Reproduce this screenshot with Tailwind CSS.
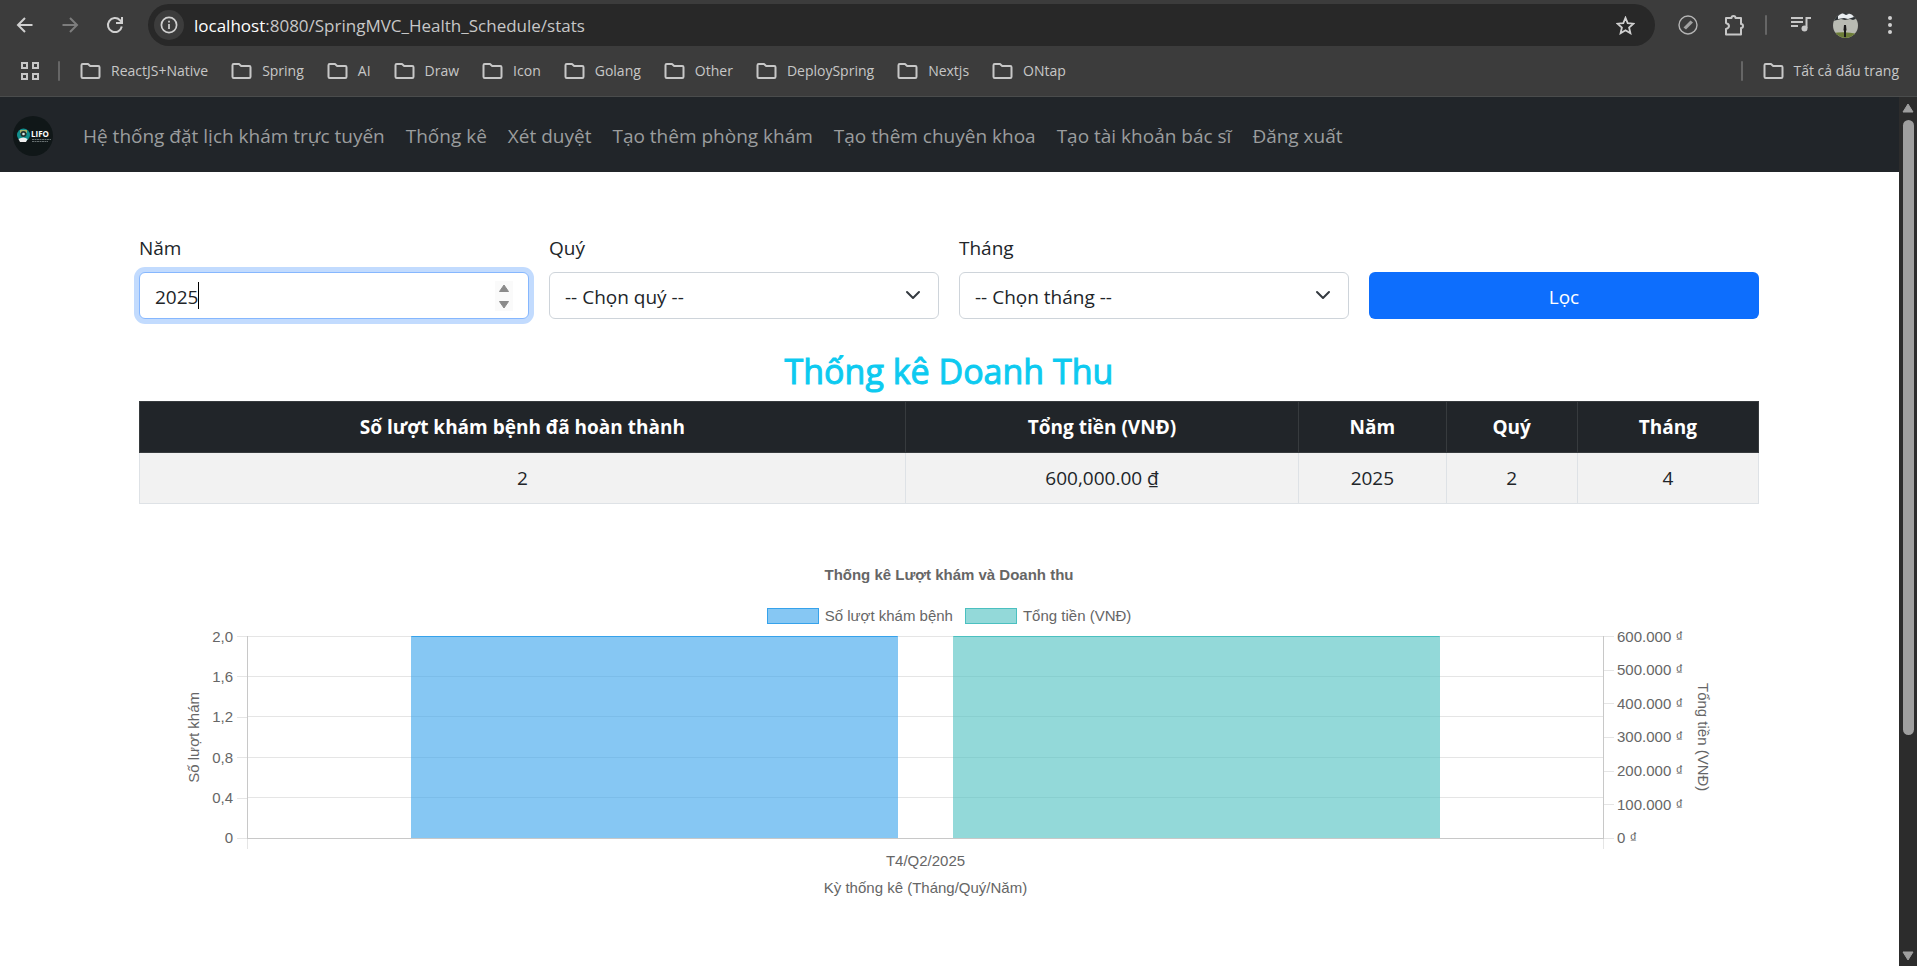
<!DOCTYPE html>
<html lang="vi">
<head>
<meta charset="utf-8">
<meta name="viewport" content="width=device-width, initial-scale=1">
<title>Thống kê Doanh Thu</title>
<script src="https://cdn.jsdelivr.net/npm/@tailwindcss/browser@4"></script>
</head>
<body class="flex h-screen flex-col overflow-hidden bg-white font-['Open_Sans','Noto_Sans',sans-serif] text-[19px] leading-[30px] text-[#212529]">

<svg class="hidden" aria-hidden="true">
  <symbol id="folder" viewBox="0 0 21 18"><path d="M1.500 3.200v11.600q0 1.200 1.200 1.200h15.600q1.200 0 1.200-1.200V5.200q0-1.200-1.200-1.200H10.200L8 2H2.700Q1.500 2 1.500 3.200Z" fill="none" stroke="#c7c7c7" stroke-width="2" stroke-linejoin="round"/></symbol>
  <symbol id="chevron" viewBox="0 0 16 16"><path d="m2 5 6 6 6-6" fill="none" stroke="#343a40" stroke-width="2" stroke-linecap="round" stroke-linejoin="round"/></symbol>
</svg>

<!-- Browser toolbar -->
<header class="shrink-0 border-b border-[#4a4c4c] bg-[#3c3c3c] text-[#c7c7c7]">
  <div class="flex h-[50px] items-center">
    <div class="flex w-[148px] shrink-0 items-center gap-[13px] pl-[9px]">
      <button aria-label="Quay lại" class="flex size-8 items-center justify-center"><svg class="size-[18px]" viewBox="0 0 18 18" fill="none" stroke="#d0d0d0" stroke-width="2"><path d="M16.500 9H2M9 2 2 9l7 7"/></svg></button>
      <button aria-label="Tiến" class="flex size-8 items-center justify-center"><svg class="size-[18px]" viewBox="0 0 18 18" fill="none" stroke="#7d7d7d" stroke-width="2"><path d="M1.500 9H16M9 2l7 7-7 7"/></svg></button>
      <button aria-label="Tải lại" class="flex size-8 items-center justify-center"><svg class="size-[18px]" viewBox="0 0 18 18" fill="none" stroke="#d0d0d0" stroke-width="2"><path d="M15.800 10.500A7 7 0 1 1 14 4.200L16 6.200M16 1v6h-6"/></svg></button>
    </div>
    <div class="flex h-[42px] flex-1 items-center rounded-full bg-[#282828] pr-5">
      <button aria-label="Thông tin trang web" class="ml-[6px] flex size-[30px] shrink-0 items-center justify-center rounded-full bg-[#3c3c3c]"><svg class="size-[18px]" viewBox="0 0 18 18" fill="none" stroke="#d0d0d0" stroke-width="1.700"><circle cx="9" cy="9" r="7.600"/><path d="M9 8v5M9 4.700v1.800"/></svg></button>
      <div class="ml-[10px] flex-1 pt-px text-[17px]"><span class="text-white">localhost</span>:8080/SpringMVC_Health_Schedule/stats</div>
      <button aria-label="Đánh dấu trang"><svg class="size-[19px]" viewBox="0 0 19 19" fill="none" stroke="#d0d0d0" stroke-width="1.800"><path d="m9.500 1.800 2.200 5.400 5.800.5-4.400 3.800 1.300 5.700-4.900-3-4.900 3 1.300-5.700L1.500 7.700l5.800-.5z"/></svg></button>
    </div>
    <div class="flex w-[262px] shrink-0 items-center pl-[23px]">
      <svg class="size-5" viewBox="0 0 20 20" fill="none"><circle cx="10" cy="10" r="9" stroke="#b5b5b5" stroke-width="1.400"/><path d="m5.500 12.500 7-7 2.500 2-7 7z" fill="#a2a2a2"/></svg>
      <svg class="ml-[25px] size-[22px]" viewBox="0 0 22 22"><path d="M3 4h5.500a2 2 0 0 1 4 0H18v6a2 2 0 0 1 0 4v6.500H3v-5.500q3-1 3-3t-3-3z" fill="none" stroke="#c7c7c7" stroke-width="2" stroke-linejoin="round"/></svg>
      <div class="ml-5 h-5 w-0.5 rounded bg-[#666]"></div>
      <svg class="ml-6 size-5" viewBox="0 0 20 20" fill="none" stroke="#c7c7c7" stroke-width="2"><path d="M0 3h12M0 7h12M0 11h7M15.500 13V3H20"/><circle cx="13.500" cy="13.500" r="3" fill="#c7c7c7" stroke="none"/></svg>
      <svg class="ml-[22px] size-[25px] rounded-full" viewBox="0 0 25 25"><path fill="#b9bbb3" d="M0 0h25v25H0z"/><path fill="#2c3135" d="M0 0h25v5L20 7l-3-1-5 1-4-1-8 2z"/><path fill="#e9edf0" d="m5 3 4-3 4 2 5-2 3 4-6 2-4-1-6 1z"/><path fill="#6c7d38" d="M0 20q12-2 25 1v5H0z"/><path fill="#1a1a1a" d="M11 12h2l.5 5-.5 1v6h-2v-6l-.5-1z"/></svg>
      <svg class="ml-[29px] h-5 w-[6px]" viewBox="0 0 6 20" fill="#d0d0d0"><circle cx="3" cy="3" r="2"/><circle cx="3" cy="10" r="2"/><circle cx="3" cy="17" r="2"/></svg>
    </div>
  </div>
  <div class="flex h-[46px] items-center pr-[18px] pb-[4px] pl-5 text-[14px] leading-5">
    <svg class="size-5" viewBox="0 0 20 20" fill="none" stroke="#c7c7c7" stroke-width="2"><path d="M2 2h5v5H2zM13 2h5v5h-5zM2 13h5v5H2zM13 13h5v5h-5z"/></svg>
    <div class="mr-5 ml-[18px] h-5 w-0.5 rounded bg-[#666]"></div>
    <nav class="flex flex-1 gap-[23px]">
      <a href="#" class="flex items-center gap-[10px]"><svg class="h-[18px] w-[21px]"><use href="#folder"/></svg>ReactJS+Native</a>
      <a href="#" class="flex items-center gap-[10px]"><svg class="h-[18px] w-[21px]"><use href="#folder"/></svg>Spring</a>
      <a href="#" class="flex items-center gap-[10px]"><svg class="h-[18px] w-[21px]"><use href="#folder"/></svg>AI</a>
      <a href="#" class="flex items-center gap-[10px]"><svg class="h-[18px] w-[21px]"><use href="#folder"/></svg>Draw</a>
      <a href="#" class="flex items-center gap-[10px]"><svg class="h-[18px] w-[21px]"><use href="#folder"/></svg>Icon</a>
      <a href="#" class="flex items-center gap-[10px]"><svg class="h-[18px] w-[21px]"><use href="#folder"/></svg>Golang</a>
      <a href="#" class="flex items-center gap-[10px]"><svg class="h-[18px] w-[21px]"><use href="#folder"/></svg>Other</a>
      <a href="#" class="flex items-center gap-[10px]"><svg class="h-[18px] w-[21px]"><use href="#folder"/></svg>DeploySpring</a>
      <a href="#" class="flex items-center gap-[10px]"><svg class="h-[18px] w-[21px]"><use href="#folder"/></svg>Nextjs</a>
      <a href="#" class="flex items-center gap-[10px]"><svg class="h-[18px] w-[21px]"><use href="#folder"/></svg>ONtap</a>
    </nav>
    <div class="mr-5 h-5 w-0.5 rounded bg-[#666]"></div>
    <a href="#" class="flex items-center gap-[10px]"><svg class="h-[18px] w-[21px]"><use href="#folder"/></svg>Tất cả dấu trang</a>
  </div>
</header>

<div class="flex min-h-0 flex-1">
  <div class="min-w-0 flex-1 overflow-hidden">

    <nav class="flex h-[75px] items-center gap-5 bg-[#212529] pt-[2px] pl-[13px] text-[#9b9d9e]">
      <a href="#" aria-label="LIFO" class="mr-[10px]">
        <svg class="size-10" viewBox="0 0 40 40"><circle cx="20" cy="20" r="20" fill="#101718"/><circle cx="10.500" cy="19" r="6.500" fill="#128f8d"/><path d="M7 14h7v3H7z" fill="#a9b26a"/><circle cx="10.500" cy="18" r="3" fill="#24302f"/><circle cx="10.500" cy="18" r="1.300" fill="#d8e8e4"/><path d="M5.500 23q5-3 9 0l-1.500 3h-6z" fill="#eee"/><text x="18" y="20.500" font-family="Open Sans" font-size="8" font-weight="700" fill="#fff">LIFO</text><path d="M19 23.500h19M19 25.500h16" stroke="#7c8586" stroke-width=".8" stroke-dasharray="2 .5"/></svg>
      </a>
      <div class="flex gap-[21px]">
        <a href="#">Hệ thống đặt lịch khám trực tuyến</a>
        <a href="#">Thống kê</a>
        <a href="#">Xét duyệt</a>
        <a href="#">Tạo thêm phòng khám</a>
        <a href="#">Tạo thêm chuyên khoa</a>
        <a href="#">Tạo tài khoản bác sĩ</a>
        <a href="#">Đăng xuất</a>
      </div>
    </nav>

    <main class="mx-auto max-w-[1651px] pt-[61px] pr-4 pl-[15px]">
      <form class="grid grid-cols-4 items-end gap-5">
        <div>
          <label for="year" class="mb-[9px] block">Năm</label>
          <div class="relative">
            <input id="year" type="number" value="2025" class="block h-[47px] w-full appearance-none rounded-md border border-[#86b7fe] bg-white px-[15px] pt-[2px] ring-5 ring-[#c2dbfe] outline-none [&::-webkit-inner-spin-button]:appearance-none">
            <span class="absolute top-[10px] left-[59px] h-[27px] w-px bg-black"></span>
            <svg class="absolute top-[9px] right-4 h-[30px] w-[18px] bg-[#fafafa]" viewBox="0 0 18 30" fill="#8b8b8b" stroke="#8b8b8b" stroke-linejoin="round"><path d="M9 4 4.500 10.500h9zM9 27l-4.500-6.500h9z"/></svg>
          </div>
        </div>
        <div>
          <label for="quarter" class="mb-[9px] block">Quý</label>
          <div class="relative">
            <select id="quarter" class="block h-[47px] w-full appearance-none rounded-md border border-[#ced4da] bg-white px-[15px] pt-[2px]"><option>-- Chọn quý --</option></select>
            <svg class="pointer-events-none absolute top-[15px] right-[18px] size-4"><use href="#chevron"/></svg>
          </div>
        </div>
        <div>
          <label for="month" class="mb-[9px] block">Tháng</label>
          <div class="relative">
            <select id="month" class="block h-[47px] w-full appearance-none rounded-md border border-[#ced4da] bg-white px-[15px] pt-[2px]"><option>-- Chọn tháng --</option></select>
            <svg class="pointer-events-none absolute top-[15px] right-[18px] size-4"><use href="#chevron"/></svg>
          </div>
        </div>
        <button type="submit" class="h-[47px] rounded-md bg-[#0d6efd] pt-[2px] text-white">Lọc</button>
      </form>

      <h1 class="mt-[31px] mb-[9px] text-center text-[34px] leading-[42px] font-medium text-[#0dcaf0] [-webkit-text-stroke:1px_#0dcaf0]">Thống kê Doanh Thu</h1>

      <table class="w-full table-fixed border-collapse text-center">
        <colgroup><col class="w-[47.3%]"><col class="w-[24.3%]"><col class="w-[9.1%]"><col class="w-[8.1%]"><col class="w-[11.2%]"></colgroup>
        <thead class="bg-[#212529] text-white">
          <tr class="h-[51px]">
            <th class="border border-[#373b3e]">Số lượt khám bệnh đã hoàn thành</th>
            <th class="border border-[#373b3e]">Tổng tiền (VNĐ)</th>
            <th class="border border-[#373b3e]">Năm</th>
            <th class="border border-[#373b3e]">Quý</th>
            <th class="border border-[#373b3e]">Tháng</th>
          </tr>
        </thead>
        <tbody class="bg-[#f2f2f2]">
          <tr class="h-[51px]">
            <td class="border border-[#dee2e6]">2</td>
            <td class="border border-[#dee2e6]">600,000.00 ₫</td>
            <td class="border border-[#dee2e6]">2025</td>
            <td class="border border-[#dee2e6]">2</td>
            <td class="border border-[#dee2e6]">4</td>
          </tr>
        </tbody>
      </table>

      <!-- Visits and revenue chart -->
      <figure class="mt-[61px] px-[45px] font-['Liberation_Sans',sans-serif] text-[15px] leading-5 text-[#666]">
        <figcaption class="text-center font-bold">Thống kê Lượt khám và Doanh thu</figcaption>
        <div class="mt-[21px] mb-[10px] flex justify-center gap-3">
          <div class="flex items-center gap-[6px]"><span class="h-4 w-[52px] border border-[#36a2eb] bg-[#36a2eb]/60"></span>Số lượt khám bệnh</div>
          <div class="flex items-center gap-[6px]"><span class="h-4 w-[52px] border border-[#4bc0c0] bg-[#4bc0c0]/60"></span>Tổng tiền (VNĐ)</div>
        </div>
        <div class="flex items-start">
          <div class="flex h-[203px] w-5 items-center justify-center"><span class="rotate-180 whitespace-nowrap [writing-mode:vertical-rl]">Số lượt khám</span></div>
          <div class="flex h-[203px] w-[29px] flex-col justify-between text-right">
            <span class="flex h-px items-center justify-end">2,0</span><span class="flex h-px items-center justify-end">1,6</span><span class="flex h-px items-center justify-end">1,2</span><span class="flex h-px items-center justify-end">0,8</span><span class="flex h-px items-center justify-end">0,4</span><span class="flex h-px items-center justify-end">0</span>
          </div>
          <div class="ml-1 flex h-[203px] w-[10px] flex-col justify-between">
            <i class="h-px bg-black/10"></i><i class="h-px bg-black/10"></i><i class="h-px bg-black/10"></i><i class="h-px bg-black/10"></i><i class="h-px bg-black/10"></i><i class="h-px bg-black/10"></i>
          </div>
          <div class="flex-1 text-center">
            <div class="relative flex h-[203px] flex-col justify-between border-x border-b border-[#c8c8c8]">
              <i class="h-px bg-black/10"></i><i class="h-px bg-black/10"></i><i class="h-px bg-black/10"></i><i class="h-px bg-black/10"></i><i class="h-px bg-black/10"></i><i class="h-px"></i>
              <div class="absolute inset-y-0 border-x border-t border-[#36a2eb]/60 border-t-[#36a2eb] bg-[#36a2eb]/60 bg-clip-padding" style="left:12%;width:36%"></div>
              <div class="absolute inset-y-0 border-x border-t border-[#4bc0c0]/60 border-t-[#4bc0c0] bg-[#4bc0c0]/60 bg-clip-padding" style="left:52%;width:36%"></div>
            </div>
            <div class="h-[10px] border-x border-black/10"></div>
            <div class="mt-[2px]">T4/Q2/2025</div>
            <div class="mt-[7px]">Kỳ thống kê (Tháng/Quý/Năm)</div>
          </div>
          <div class="mr-[3px] flex h-[203px] w-[10px] flex-col justify-between">
            <i class="h-px bg-black/10"></i><i class="h-px bg-black/10"></i><i class="h-px bg-black/10"></i><i class="h-px bg-black/10"></i><i class="h-px bg-black/10"></i><i class="h-px bg-black/10"></i><i class="h-px bg-black/10"></i>
          </div>
          <div class="flex h-[203px] w-[75px] flex-col justify-between whitespace-nowrap">
            <span class="flex h-px items-center">600.000 ₫</span><span class="flex h-px items-center">500.000 ₫</span><span class="flex h-px items-center">400.000 ₫</span><span class="flex h-px items-center">300.000 ₫</span><span class="flex h-px items-center">200.000 ₫</span><span class="flex h-px items-center">100.000 ₫</span><span class="flex h-px items-center">0 ₫</span>
          </div>
          <div class="flex h-[203px] w-[22px] items-center justify-center"><span class="whitespace-nowrap [writing-mode:vertical-rl]">Tổng tiền (VNĐ)</span></div>
        </div>
      </figure>
    </main>
  </div>

  <!-- Page scrollbar -->
  <div class="flex w-[18px] shrink-0 flex-col items-center bg-[#2c2c2c] pt-[6px] pb-[5px]" aria-hidden="true">
    <svg class="h-[10px] w-3" viewBox="0 0 12 10" fill="#9f9f9f" stroke="#9f9f9f" stroke-linejoin="round"><path d="M6 1 1 9h10z"/></svg>
    <div class="mt-[7px] flex w-[11px] flex-1 flex-col"><div class="rounded-full bg-[#9f9f9f]" style="height:74%"></div></div>
    <svg class="h-[10px] w-3" viewBox="0 0 12 10" fill="#9f9f9f" stroke="#9f9f9f" stroke-linejoin="round"><path d="M6 9 1 1h10z"/></svg>
  </div>
</div>
</body>
</html>
